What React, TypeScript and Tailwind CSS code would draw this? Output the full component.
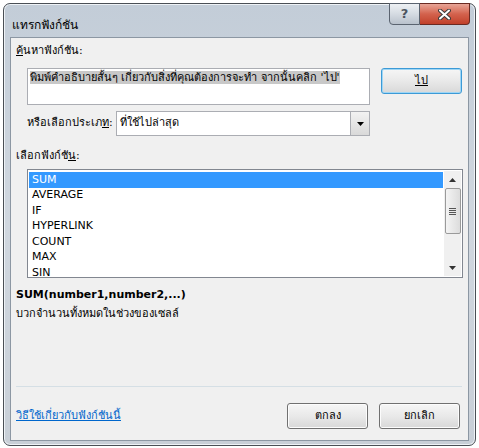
const font = { fontFamily: '"Tahoma", "DejaVu Sans", "Noto Sans", sans-serif' };

const functions = ["SUM", "AVERAGE", "IF", "HYPERLINK", "COUNT", "MAX", "SIN"];

const WinButton: React.FC<{ label: React.ReactNode; focused?: boolean }> = ({ label, focused }) => (
  <button
    className={`w-[81px] h-[26px] rounded-[3px] border text-[11px] text-black bg-gradient-to-b from-[#f6f6f6] via-[#e9e9e9] to-[#d8d8d8] ${
      focused ? "border-[#3c9ad6] shadow-[inset_0_0_0_1px_#9fd6f5]" : "border-[#707070] shadow-[inset_0_0_0_1px_#fcfcfc]"
    }`}
  >
    {label}
  </button>
);

export default function App() {
  return (
    <div className="w-[479px] h-[448px] bg-white pt-[3px] pl-[3px]" style={font}>
      <div className="w-[473px] h-[443px] rounded-[7px] border border-[#4a4f55] bg-gradient-to-b from-[#c3cdd8] via-[#d0d7df] to-[#c8cfd7] flex flex-col px-[6px] pb-[4px] shadow-[inset_0_0_0_1px_#eef2f6]">
        {/* title bar */}
        <div className="h-[33px] flex items-start justify-between">
          <div className="pt-[12px] pl-[2px] text-[12px] text-black">แทรกฟังก์ชัน</div>
          <div className="flex -mt-px mr-[-1px]">
            <div className="w-[31px] h-[22px] rounded-bl-[4px] border border-[#5b6470] bg-gradient-to-b from-[#eef1f4] via-[#d5dbe2] to-[#b9c2cc] flex items-center justify-center text-[13px] font-bold text-[#4d5560]">
              ?
            </div>
            <div className="w-[50px] h-[22px] rounded-br-[4px] border border-l-0 border-[#6a2a22] bg-gradient-to-b from-[#e7a597] via-[#d3624d] to-[#c1402a] flex items-center justify-center">
              <svg width="13" height="11" viewBox="0 0 13 11">
                <path d="M2 1.5 L11 9.5 M11 1.5 L2 9.5" stroke="#3b3b3b" strokeWidth="4" strokeLinecap="round" />
                <path d="M2 1.5 L11 9.5 M11 1.5 L2 9.5" stroke="#ffffff" strokeWidth="2" strokeLinecap="round" />
              </svg>
            </div>
          </div>
        </div>

        {/* client area */}
        <div className="flex-1 border border-[#8c97a3] bg-[#f0f0f0] text-[11px] text-black flex flex-col pl-[5px] pr-[6px]">
          <div className="mt-[6px] leading-[14px]">
            <span className="underline">ค้</span>นหาฟังก์ชัน:
          </div>

          <div className="flex mt-[10px] pl-[11px] gap-[11px]">
            <div className="w-[343px] h-[37px] border border-[#abadb3] bg-white px-[2px] pt-[2px] leading-[14px]">
              <span className="bg-[#c8c8c8]">พิมพ์คำอธิบายสั้นๆ เกี่ยวกับสิ่งที่คุณต้องการจะทำ จากนั้นคลิก 'ไป'</span>
            </div>
            <WinButton focused label={<span className="underline">ไป</span>} />
          </div>

          <div className="flex items-center mt-[6px] ml-[11px] w-[343px] gap-[3px]">
            <span className="whitespace-nowrap">
              หรือเลือกประเภ<span className="underline">ท</span>:
            </span>
            <div className="flex-1 h-[25px] border border-[#abadb3] bg-white flex items-center">
              <span className="flex-1 pl-[3px]">ที่ใช้ไปล่าสุด</span>
              <div className="w-[19px] h-[23px] border-l border-[#abadb3] bg-gradient-to-b from-[#f2f2f2] to-[#d9d9d9] flex items-center justify-center">
                <svg width="7" height="4" viewBox="0 0 7 4">
                  <path d="M0 0 H7 L3.5 4 Z" fill="#000" />
                </svg>
              </div>
            </div>
          </div>

          <div className="mt-[13px] leading-[14px]">
            เลือกฟังก์ชั<span className="underline">น</span>:
          </div>

          <div className="ml-[11px] mt-[6px] w-[436px] h-[109px] border border-[#828790] bg-white flex p-[1px]">
            <div className="flex-1 flex flex-col pt-px">
              {functions.map((fn, i) => (
                <div
                  key={fn}
                  className={`h-[15.5px] flex items-center pl-[3px] mr-px ${i === 0 ? "bg-[#3399ff] text-white" : ""}`}
                >
                  {fn}
                </div>
              ))}
            </div>
            <div className="w-[17px] bg-[#f0f0f0] flex flex-col items-center">
              <div className="h-[17px] flex items-center justify-center">
                <svg width="7" height="4" viewBox="0 0 7 4">
                  <path d="M0 4 H7 L3.5 0 Z" fill="#333" />
                </svg>
              </div>
              <div className="w-[16px] h-[46px] rounded-[2px] border border-[#9a9a9a] bg-gradient-to-r from-[#f4f4f4] to-[#dcdcdc] flex flex-col items-center justify-center gap-[1px]">
                <div className="w-[7px] h-px bg-[#555]" />
                <div className="w-[7px] h-px bg-[#555]" />
                <div className="w-[7px] h-px bg-[#555]" />
                <div className="w-[7px] h-px bg-[#555]" />
              </div>
              <div className="flex-1" />
              <div className="h-[17px] flex items-center justify-center">
                <svg width="7" height="4" viewBox="0 0 7 4">
                  <path d="M0 0 H7 L3.5 4 Z" fill="#333" />
                </svg>
              </div>
            </div>
          </div>

          <div className="mt-[10px] font-bold leading-[14px]">SUM(number1,number2,...)</div>
          <div className="mt-[5px] leading-[14px]">บวกจำนวนทั้งหมดในช่วงของเซลล์</div>

          <div className="flex-1" />
          <div className="h-px bg-[#d5dfe5] mb-[16px]" />

          <div className="flex items-center justify-between mb-[11px]">
            <a className="text-[#0066cc] underline">วิธีใช้เกี่ยวกับฟังก์ชันนี้</a>
            <div className="flex gap-[11px] mr-[2px]">
              <WinButton label="ตกลง" />
              <WinButton label="ยกเลิก" />
            </div>
          </div>
        </div>
      </div>
    </div>
  );
}
